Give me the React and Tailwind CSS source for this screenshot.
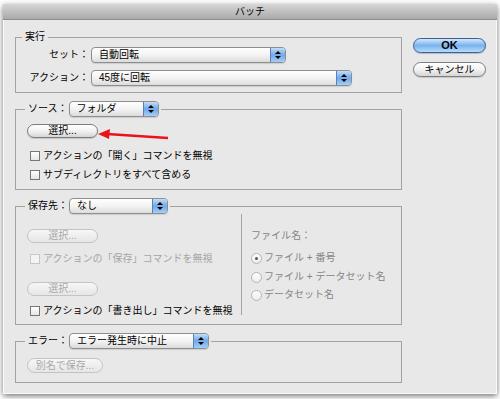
import React from "react";

// Mac OS X "バッチ" dialog (Photoshop batch)

const Tri = ({ up }) => (
  <span
    className={
      up
        ? "h-0 w-0 border-x-[3px] border-x-transparent border-b-[3px] border-b-black"
        : "h-0 w-0 border-x-[3px] border-x-transparent border-t-[3px] border-t-black"
    }
  />
);

const Popup = ({ value, width }) => (
  <div
    className={`flex h-[16px] ${width} overflow-hidden rounded-[4px] border border-[#8e8e8e] bg-gradient-to-b from-white via-[#f3f3f3] to-[#dcdcdc] shadow-[0_1px_1px_rgba(0,0,0,0.12)]`}
  >
    <span className="flex-1 pl-[7px] text-[10px] leading-[14px] text-black">{value}</span>
    <span className="flex w-[15px] flex-col items-center justify-center gap-[2px] border-l border-[#5b80b8] bg-gradient-to-b from-[#c2ddf8] via-[#6fa8ea] to-[#a4cff7]">
      <Tri up />
      <Tri />
    </span>
  </div>
);

const Pill = ({ children, disabled, width, height }) => (
  <div
    className={
      disabled
        ? `flex ${width} ${height} items-center justify-center rounded-full border border-[#c3c3c3] bg-gradient-to-b from-[#f7f7f7] to-[#e6e6e6] text-[10px] leading-none text-[#a8a8a8]`
        : `flex ${width} ${height} items-center justify-center rounded-full border border-[#7d7d7d] bg-gradient-to-b from-white via-[#f2f2f2] to-[#d6d6d6] text-[10px] leading-none text-black shadow-[0_1px_1px_rgba(0,0,0,0.15)]`
    }
  >
    {children}
  </div>
);

const Check = ({ label, disabled, className }) => (
  <div className={`flex h-[12px] items-center pl-[14px] ${className}`}>
    <span
      className={
        disabled
          ? "h-[10px] w-[10px] border border-[#c6c6c6] bg-[#f4f4f4]"
          : "h-[10px] w-[10px] border border-[#777] bg-gradient-to-b from-white to-[#e6e6e6]"
      }
    />
    <span
      className={`ml-[3px] text-[10px] leading-[12px] ${disabled ? "text-[#a5a5a5]" : "text-black"}`}
    >
      {label}
    </span>
  </div>
);

const Radio = ({ label, checked, className }) => (
  <div className={`flex h-[12px] items-center ${className}`}>
    <span className="flex h-[11px] w-[11px] items-center justify-center rounded-full border border-[#b4b4b4] bg-gradient-to-b from-white to-[#ececec]">
      {checked && <span className="h-[3px] w-[3px] rounded-full bg-[#555]" />}
    </span>
    <span className="ml-[2px] text-[10px] leading-[12px] text-[#858585]">{label}</span>
  </div>
);

export default function App() {
  return (
    <div className="h-[399px] w-[500px] overflow-hidden bg-white font-['Liberation_Sans','Noto_Sans_CJK_JP',sans-serif]">
      <div className="ml-[3px] mt-[4px] h-[390px] w-[494px] bg-[#e8e8e8] shadow-[inset_1px_0_0_#fafafa,inset_-1px_0_0_#fafafa,inset_0_-1px_0_#fafafa,0_2px_6px_rgba(0,0,0,0.55)]">
        {/* Title bar */}
        <div className="flex h-[16px] items-center justify-center border-b border-[#8d8d8d] bg-gradient-to-b from-[#d6d6d6] to-[#aaaaaa] text-[10px] leading-none text-black">
          バッチ
        </div>

        <div className="flex pl-[12px] pt-[11px]">
          {/* Groups */}
          <div className="w-[387px]">
            {/* 実行 */}
            <fieldset className="border border-[#a2a2a2]">
              <legend className="ml-[6px] px-[3px] text-[10px] leading-[12px] text-black">実行</legend>
              <div className="mt-[4px] flex items-center">
                <span className="w-[73px] text-right text-[10px] leading-[12px]">セット：</span>
                <div className="ml-[2px]">
                  <Popup value="自動回転" width="w-[195px]" />
                </div>
              </div>
              <div className="mb-[6px] mt-[7px] flex items-center">
                <span className="w-[73px] text-right text-[10px] leading-[12px]">アクション：</span>
                <div className="ml-[2px]">
                  <Popup value="45度に回転" width="w-[261px]" />
                </div>
              </div>
            </fieldset>

            {/* ソース */}
            <fieldset className="mt-[8px] border border-[#a2a2a2]">
              <legend className="ml-[9px] pl-[3px] pr-[2px]">
                <div className="flex h-[16px] items-center">
                  <span className="text-[10px] leading-[12px]">ソース：</span>
                  <div className="ml-[1px]">
                    <Popup value="フォルダ" width="w-[90px]" />
                  </div>
                </div>
              </legend>
              <div className="relative mt-[7px] pl-[11px]">
                <Pill width="w-[71px]" height="h-[14px]">選択...</Pill>
                <svg
                  className="absolute left-[81px] top-[1px]"
                  width="74"
                  height="16"
                  viewBox="0 0 74 16"
                >
                  <line x1="10" y1="9" x2="71" y2="13" stroke="#e8141a" strokeWidth="2.4" />
                  <polygon points="1,9 13,4 12,14" fill="#e8141a" />
                </svg>
              </div>
              <Check className="mt-[12px]" label="アクションの「開く」コマンドを無視" />
              <Check className="mb-[8px] mt-[7px]" label="サブディレクトリをすべて含める" />
            </fieldset>

            {/* 保存先 */}
            <fieldset className="mt-[8px] border border-[#a2a2a2]">
              <legend className="ml-[9px] pl-[3px] pr-[2px]">
                <div className="flex h-[16px] items-center">
                  <span className="text-[10px] leading-[12px]">保存先：</span>
                  <div className="ml-[1px]">
                    <Popup value="なし" width="w-[99px]" />
                  </div>
                </div>
              </legend>
              <div className="flex">
                <div className="w-[225px] pb-[7px] pl-[11px]">
                  <div className="mt-[15px]">
                    <Pill disabled width="w-[71px]" height="h-[14px]">選択...</Pill>
                  </div>
                  <Check disabled className="mt-[10px] !pl-[3px]" label="アクションの「保存」コマンドを無視" />
                  <div className="mt-[17px]">
                    <Pill disabled width="w-[71px]" height="h-[14px]">選択...</Pill>
                  </div>
                  <Check className="mt-[9px] !pl-[3px]" label="アクションの「書き出し」コマンドを無視" />
                </div>
                <div className="mb-[9px] w-px self-stretch bg-[#a4a4a4]" />
                <div className="pl-[9px]">
                  <div className="mt-[16px] text-[10px] leading-[12px] text-[#858585]">ファイル名：</div>
                  <Radio className="mt-[10px]" checked label="ファイル + 番号" />
                  <Radio className="mt-[7px]" label="ファイル + データセット名" />
                  <Radio className="mt-[6px]" label="データセット名" />
                </div>
              </div>
            </fieldset>

            {/* エラー */}
            <fieldset className="mt-[8px] border border-[#a2a2a2]">
              <legend className="ml-[9px] pl-[3px] pr-[2px]">
                <div className="flex h-[16px] items-center">
                  <span className="text-[10px] leading-[12px]">エラー：</span>
                  <div className="ml-[1px]">
                    <Popup value="エラー発生時に中止" width="w-[140px]" />
                  </div>
                </div>
              </legend>
              <div className="mb-[9px] mt-[9px] pl-[11px]">
                <Pill disabled width="w-[76px]" height="h-[15px]">別名で保存...</Pill>
              </div>
            </fieldset>
          </div>

          {/* Buttons */}
          <div className="ml-[11px] w-[73px]">
            <div className="mt-[7px] flex h-[15px] items-center justify-center rounded-full border border-[#3d5f97] bg-gradient-to-b from-[#d3e7fb] via-[#79b3ee] to-[#b6dcfb] text-[11px] font-bold leading-none text-black shadow-[0_1px_1px_rgba(0,0,0,0.2)]">
              OK
            </div>
            <div className="mt-[9px] flex h-[15px] items-center justify-center rounded-full border border-[#7d7d7d] bg-gradient-to-b from-white via-[#f2f2f2] to-[#d6d6d6] text-[10px] leading-none text-black shadow-[0_1px_1px_rgba(0,0,0,0.15)]">
              キャンセル
            </div>
          </div>
        </div>
      </div>
    </div>
  );
}
